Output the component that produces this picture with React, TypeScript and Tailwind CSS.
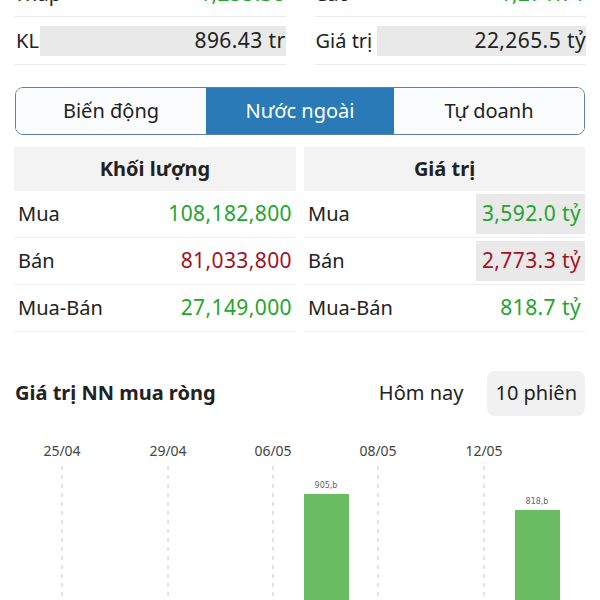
import React from 'react';

const GREEN = 'text-[#22a52c]';
const RED = 'text-[#a3121f]';
const NUM = 'text-[21px] tracking-[0.4px]';

const volRows = [
  { label: 'Mua', value: '108,182,800', color: GREEN },
  { label: 'Bán', value: '81,033,800', color: RED },
  { label: 'Mua-Bán', value: '27,149,000', color: GREEN },
];

const valRows = [
  { label: 'Mua', value: '3,592.0 tỷ', color: GREEN, shade: true },
  { label: 'Bán', value: '2,773.3 tỷ', color: RED, shade: true },
  { label: 'Mua-Bán', value: '818.7 tỷ', color: GREEN, shade: false },
];

const dates = [
  { x: 62, label: '25/04' },
  { x: 168, label: '29/04' },
  { x: 273, label: '06/05' },
  { x: 378, label: '08/05' },
  { x: 484, label: '12/05' },
];

const bars = [
  { x: 304, top: 64, label: '905,b' },
  { x: 515, top: 80, label: '818,b' },
];

function Chart() {
  return (
    <svg width="600" height="170" viewBox="0 0 600 170" className="block">
      {dates.map((d) => (
        <g key={d.label}>
          <text
            x={d.x}
            y={26}
            textAnchor="middle"
            fontSize="14"
            fill="#444"
            fontFamily="'Noto Sans', sans-serif"
          >
            {d.label}
          </text>
          <line x1={d.x} y1={36} x2={d.x} y2={170} stroke="#c8c8c8" strokeWidth="1" strokeDasharray="4 5" />
        </g>
      ))}
      {bars.map((b) => (
        <g key={b.label}>
          <text
            x={b.x + 22}
            y={b.top - 6}
            textAnchor="middle"
            fontSize="8"
            fill="#666"
            fontFamily="'DejaVu Sans', sans-serif"
          >
            {b.label}
          </text>
          <rect x={b.x} y={b.top} width={45} height={170 - b.top} fill="#6abc63" />
        </g>
      ))}
    </svg>
  );
}

export default function App() {
  return (
    <div className="w-[600px] h-[600px] overflow-hidden bg-white text-[#222] font-['Noto_Sans','Roboto',sans-serif]">
      {/* thông tin phiên */}
      <div className="px-[14px] -mt-[29px]">
        <div className="flex gap-[29px]">
          <div className="flex-1 flex items-center justify-between h-[46px] border-b border-[#ececec] text-[20px]">
            <span>Thấp</span>
            <span className={`${GREEN} ${NUM}`}>1,255.38</span>
          </div>
          <div className="flex-1 flex items-center justify-between h-[46px] border-b border-[#ececec] text-[20px]">
            <span>Cao</span>
            <span className={`${GREEN} ${NUM}`}>1,271.71</span>
          </div>
        </div>
        <div className="flex gap-[29px]">
          <div className="flex-1 flex items-center h-[48px] border-b border-[#ececec] text-[20px]">
            <span className="pl-[2px] w-[26px]">KL</span>
            <div className="flex-1 h-[30px] bg-[#e9e9e9] flex items-center justify-end">
              <span className={NUM}>896.43 tr</span>
            </div>
          </div>
          <div className="flex-1 flex items-center h-[48px] border-b border-[#ececec] text-[20px]">
            <span className="w-[62px] pl-[1px]">Giá trị</span>
            <div className="flex-1 h-[30px] bg-[#e9e9e9] flex items-center justify-end">
              <span className={NUM}>22,265.5 tỷ</span>
            </div>
          </div>
        </div>
      </div>

      {/* tabs */}
      <div className="px-[15px] mt-[22px]">
        <div className="flex h-[48px] border-[1.5px] border-[#5b84a3] rounded-[8px] overflow-hidden text-[20px]">
          <div className="w-[190px] flex items-center justify-center bg-[#fbfcfd]">Biến động</div>
          <div className="w-[188px] flex items-center justify-center bg-[#2a7ab8] text-white">Nước ngoài</div>
          <div className="flex-1 flex items-center justify-center bg-[#fbfcfd]">Tự doanh</div>
        </div>
      </div>

      {/* bảng khối lượng / giá trị */}
      <div className="px-[14px] mt-[12px] flex gap-[8px] text-[20px]">
        <div className="w-[282px]">
          <div className="h-[44px] bg-[#f3f3f3] flex items-center justify-center font-bold">Khối lượng</div>
          {volRows.map((r) => (
            <div key={r.label} className="h-[47px] flex items-center justify-between border-b border-[#efefef] px-[4px]">
              <span>{r.label}</span>
              <span className={`${r.color} ${NUM}`}>{r.value}</span>
            </div>
          ))}
        </div>
        <div className="flex-1 pr-[1px]">
          <div className="h-[44px] bg-[#f3f3f3] flex items-center justify-center font-bold">Giá trị</div>
          {valRows.map((r) => (
            <div key={r.label} className="h-[47px] flex items-center justify-between border-b border-[#efefef]">
              <span className="pl-[4px]">{r.label}</span>
              <span
                className={`${r.color} ${NUM} h-[40px] flex items-center pl-[6px] pr-[4px] ${r.shade ? 'bg-[#e9e9e9]' : ''}`}
              >
                {r.value}
              </span>
            </div>
          ))}
        </div>
      </div>

      {/* biểu đồ */}
      <div className="px-[15px] mt-[38px] flex items-center justify-between h-[46px]">
        <span className="text-[20px] font-bold">Giá trị NN mua ròng</span>
        <div className="flex items-center text-[20px]">
          <span className="mr-[24px]">Hôm nay</span>
          <span className="bg-[#f1f1f1] rounded-[8px] h-[45px] px-[8px] flex items-center">10 phiên</span>
        </div>
      </div>
      <div className="mt-[14px]">
        <Chart />
      </div>
    </div>
  );
}
